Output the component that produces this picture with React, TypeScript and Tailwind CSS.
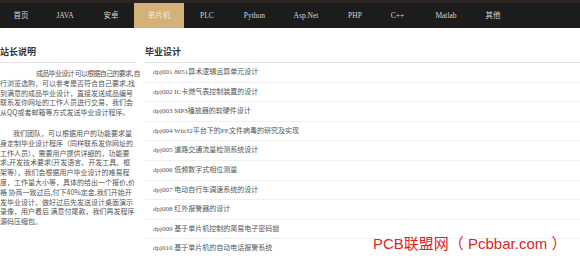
import React from "react";

const nav: { t: string; w: string; active?: boolean }[] = [
  { t: "首页", w: "w-[42px]" },
  { t: "JAVA", w: "w-[46px]" },
  { t: "安卓", w: "w-[46px]" },
  { t: "单片机", w: "w-[50px]", active: true },
  { t: "PLC", w: "w-[46px]" },
  { t: "Python", w: "w-[49px]" },
  { t: "Asp.Net", w: "w-[54px]" },
  { t: "PHP", w: "w-[44px]" },
  { t: "C++", w: "w-[41px]" },
  { t: "Matlab", w: "w-[56px]" },
  { t: "其他", w: "w-[38px]" },
];

const p1 = [
  "成品毕业设计 可以根据自己的要求, 自",
  "行浏览选购，可以参考是否符合自己要求,找",
  "到满意的成品毕业设计，直接发送成品编号",
  "联系发你网址的工作人员进行交易，我们会",
  "从QQ或者邮箱等方式发送毕业设计程序。",
];

const p2 = [
  "我们团队，可以根据用户的功能要求量",
  "身定制毕业设计程序（同样联系发你网址的",
  "工作人员），需要用户提供详细的，功能要",
  "求,开发技术要求(开发语言、开发工具、框",
  "架等），我们会根据用户毕业设计的难易程",
  "度，工作量大小等，具体的给出一个报价,价",
  "格 协商一致过后,付下40%定金,我们开始开",
  "发毕业设计，做好过后先发送设计桌面演示",
  "录像，用户看后 满意付尾款，我们再发程序",
  "源码压缩包。",
];

const items = [
  "dpj001 8051算术逻辑运算单元设计",
  "dpj002 IC卡燃气表控制装置的设计",
  "dpj003 MP3播放器的软硬件设计",
  "dpj004 Win32平台下的PE文件病毒的研究及实现",
  "dpj005 道路交通流量检测系统设计",
  "dpj006 低频数字式相位测量",
  "dpj007 电动自行车调速系统的设计",
  "dpj008 红外报警器的设计",
  "dpj009 基于单片机控制的简易电子密码锁",
  "dpj010 基于单片机的自动电话报警系统",
];

export default function App() {
  return (
    <div className="relative w-[580px] h-[258px] overflow-hidden bg-white">
      <div className="flex h-[28px] bg-[#1c1c1c] border-t-[3px] border-[#2d2522]">
        {nav.map((n) => (
          <div
            key={n.t}
            className={`${n.w} flex items-center justify-center text-[7.5px] font-['Liberation_Serif','Noto_Sans_CJK_SC',serif] ${
              n.active ? "bg-[#d3b179] text-[#f3ead8]" : "text-[#d6d6d6]"
            }`}
          >
            {n.t}
          </div>
        ))}
      </div>

      <div className="flex">
        <div className="w-[136px] shrink-0">
          <div className="h-[35px] pt-[18px] border-b border-[#e4e4e4] text-[9px] leading-[12px] font-bold text-[#333] font-['Noto_Sans_CJK_SC',sans-serif]">
            站长说明
          </div>
          <div className="mt-[6px] text-[7px] leading-[9.8px] text-[#555] font-['Noto_Sans_CJK_SC',sans-serif]">
            {p1.map((l, i) => (
              <div
                key={i}
                className={`whitespace-nowrap ${i === 0 ? "pl-[36px] tracking-[-0.7px]" : ""}`}
              >
                {l}
              </div>
            ))}
          </div>
          <div className="mt-[11px] text-[7px] leading-[9.8px] text-[#555] font-['Noto_Sans_CJK_SC',sans-serif]">
            {p2.map((l, i) => (
              <div key={i} className={`whitespace-nowrap ${i === 0 ? "pl-[13px]" : ""}`}>
                {l}
              </div>
            ))}
          </div>
        </div>

        <div className="ml-[9px] flex-1">
          <div className="h-[35px] pt-[18px] border-b border-[#e4e4e4] text-[9px] leading-[12px] font-bold text-[#333] font-['Noto_Sans_CJK_SC',sans-serif]">
            毕业设计
          </div>
          <ul>
            {items.map((it) => (
              <li
                key={it}
                className="h-[19.6px] border-b border-[#f0f0f0] pl-[8px] flex items-center text-[7px] text-[#555] font-['Liberation_Serif','Noto_Sans_CJK_SC',serif]"
              >
                {it}
              </li>
            ))}
          </ul>
        </div>
      </div>

      <div className="absolute left-[373px] top-[234px] text-[15px] leading-[20px] text-[#e0251f] whitespace-nowrap font-['Liberation_Sans','Noto_Sans_CJK_SC',sans-serif]">
        PCB联盟网（ Pcbbar.com ）
      </div>
    </div>
  );
}
